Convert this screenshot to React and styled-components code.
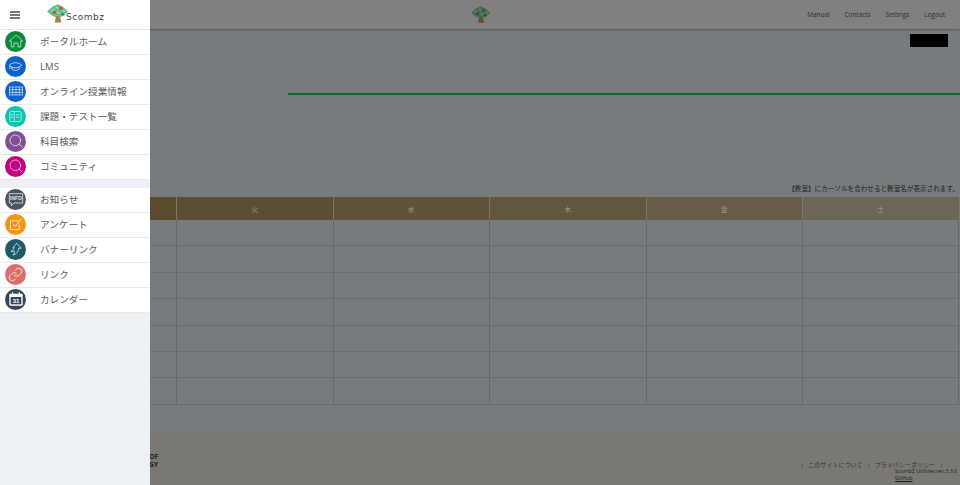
import React from 'react'
import styled, { createGlobalStyle } from 'styled-components'
import { Search, Link as LinkIcon } from 'lucide-react'

const GlobalStyle = createGlobalStyle`
    html, body {
        margin: 0;
        padding: 0;
        height: 100%;
        background-color: #777b7d;
        font-family: "Open Sans", "Noto Sans CJK JP", sans-serif;
        overflow: hidden;
    }
`

const Page = styled.div`
    width: 960px;
    height: 485px;
    display: flex;
    flex-direction: column;
    overflow: hidden;
    background-color: #777b7d;
`

const Header = styled.header`
    flex: 0 0 29px;
    position: relative;
    display: flex;
    align-items: center;
    justify-content: flex-end;
    padding-right: 15px;
    gap: 15px;
    background-color: #808080;
    box-shadow: 0 1px 2px #555;
`

const HeaderLogo = styled.div`
    position: absolute;
    left: 471px;
    top: 6px;
    display: flex;
    filter: brightness(0.6);
`

const NavLink = styled.a`
    font-size: 6.4px;
    color: #2e2e2e;
`

const Main = styled.main`
    flex: 1;
    display: flex;
    flex-direction: column;
`

const RedactRow = styled.div`
    display: flex;
    justify-content: flex-end;
    padding: 5px 12px 0 0;
    height: 64px;
    box-sizing: border-box;
`

const Redact = styled.div`
    width: 38px;
    height: 13px;
    background-color: #000;
`

const Rule = styled.div`
    display: flex;
    height: 2px;
`

const RuleSide = styled.div`
    flex: ${p => (p.$green ? 1 : '0 0 288px')};
    background-color: ${p => (p.$green ? '#0f6b26' : '#797d7f')};
`

const Notice = styled.p`
    margin: 89px 1px 0 0;
    height: 13px;
    line-height: 10px;
    text-align: right;
    font-size: 6.6px;
    color: #222;
`

const TimeTable = styled.div`
    display: grid;
    grid-template-columns: 19.5px repeat(6, 156.5px);
`

const HeadCell = styled.div`
    height: 23px;
    display: flex;
    align-items: center;
    justify-content: center;
    font-size: 7px;
    color: #9a9a94;
    background-color: ${p => p.$bg};
    border-left: 1px solid #7d7565;
    box-sizing: border-box;
`

const BodyCell = styled.div`
    height: 26.4px;
    box-sizing: border-box;
    border-left: 1px solid #67696b;
    border-bottom: 1px solid #6a6c6e;
    &:nth-child(7n) {
        border-right: 1px solid #67696b;
    }
`

const Footer = styled.footer`
    margin-top: 27px;
    flex: 1;
    position: relative;
    background-color: #7a7873;
    display: flex;
    justify-content: space-between;
    align-items: flex-start;
    padding: 21px 17px 0 0;
`

const School = styled.div`
    width: 158px;
    text-align: right;
    font-size: 6.5px;
    font-weight: 700;
    line-height: 8px;
    color: #222;
`

const FooterLinks = styled.div`
    display: flex;
    gap: 4.5px;
    margin-top: 8px;
    font-size: 6.05px;
    line-height: 9px;
    color: #333;
`

const Version = styled.div`
    position: absolute;
    left: 895px;
    top: 36px;
    white-space: nowrap;
    font-size: 5.3px;
    line-height: 7.5px;
    color: #222;
`

const GitHub = styled.a`
    display: block;
    text-decoration: underline;
`

const Sidebar = styled.aside`
    position: fixed;
    left: 0;
    top: 0;
    width: 150px;
    height: 100%;
    background-color: #edf1f5;
`

const SideTop = styled.div`
    height: 30px;
    box-sizing: border-box;
    display: flex;
    align-items: center;
    background-color: #fff;
    border-bottom: 1px solid #e6e6e6;
`

const Burger = styled.div`
    width: 10px;
    margin-left: 10px;
    height: 8px;
    box-sizing: border-box;
    border-top: 2px solid #777;
    border-bottom: 2px solid #777;
    position: relative;
    &::after {
        content: '';
        position: absolute;
        left: 0;
        right: 0;
        top: 1px;
        height: 2px;
        background-color: #777;
    }
`

const Brand = styled.div`
    margin-left: 27px;
    padding-bottom: 2px;
    display: flex;
    align-items: flex-end;
`

const BrandText = styled.span`
    font-family: "DejaVu Sans", sans-serif;
    font-size: 9px;
    letter-spacing: 0.5px;
    line-height: 12px;
    color: #444;
    margin-left: -3px;
`

const MenuGroup = styled.nav`
    margin-bottom: ${p => p.$gap || 0}px;
`

const MenuItem = styled.a`
    height: 25px;
    box-sizing: border-box;
    display: flex;
    align-items: center;
    background-color: #fff;
    border-bottom: 1px solid #e9e9e9;
    padding: 0 0 2px 5px;
    font-size: 9.65px;
    color: #5c5c5c;
`

const IconCircle = styled.span`
    flex: 0 0 21px;
    width: 21px;
    height: 21px;
    border-radius: 50%;
    background-color: ${p => p.$color};
    color: rgba(255, 255, 255, 0.85);
    display: flex;
    align-items: center;
    justify-content: center;
`

const Label = styled.span`
    margin-left: 14px;
    white-space: nowrap;
`

const Tree = ({ size = 20 }) => (
  <svg width={size} height={size * 0.85} viewBox="0 0 24 20">
    <path d="M10 12h4l1.5 8h-7z" fill="#a5824c" />
    <path d="M12 0l5 2.5 6 5.5-5 5-3.5 1-2.5-2-3 2-3.5-1.5-5.5-4.5 6-5.5z" fill="#62c088" />
    <path d="M5 8l3-3M10 3l3 2M17 7l3 1M11 9l3 1" stroke="#c9ecd5" strokeWidth="1" />
    <circle cx="8" cy="9" r="1.8" fill="#d6454a" />
    <circle cx="15" cy="4.5" r="1.8" fill="#d6454a" />
    <circle cx="17" cy="11" r="1.1" fill="#444" />
  </svg>
)

const HouseIcon = () => (
  <svg width="16" height="16" viewBox="0 0 24 24" fill="none" stroke="currentColor" strokeWidth="1.1">
    <path d="M2 12L12 3l10 9h-3v9h-4v-6H9v6H5v-9z" />
  </svg>
)

const CapIcon = () => (
  <svg width="15" height="15" viewBox="0 0 24 24" fill="none" stroke="currentColor" strokeWidth="1.3">
    <path d="M2 10c3-3 6-4 10-4s7 1 10 4c-3 3-6 4-10 4s-7-1-10-4z" />
    <path d="M6 13v3c3 3 9 3 12 0v-3" />
    <path d="M3 11v5" />
  </svg>
)

const GridIcon = () => (
  <svg width="16" height="16" viewBox="0 0 24 24" fill="none" stroke="currentColor" strokeWidth="1">
    <rect x="2" y="6" width="20" height="12" />
    <path d="M2 10h20M2 14h20M7 6v12M12 6v12M17 6v12" />
  </svg>
)

const TaskIcon = () => (
  <svg width="15" height="15" viewBox="0 0 24 24" fill="none" stroke="currentColor" strokeWidth="1.2">
    <rect x="3" y="4" width="18" height="16" rx="2" />
    <path d="M10 4v16M5 9h3M5 13h3M13 9h5M13 13h5" />
  </svg>
)

const InfoIcon = () => (
  <svg width="16" height="16" viewBox="0 0 24 24" fill="none" stroke="currentColor" strokeWidth="1.2">
    <path d="M2 4h20v14H9l-4 4v-4H2z" />
    <text x="12" y="14" fontSize="7.5" fontWeight="700" textAnchor="middle" fill="currentColor" stroke="none" fontFamily="Liberation Sans">INFO</text>
  </svg>
)

const CheckIcon = () => (
  <svg width="15" height="15" viewBox="0 0 24 24" fill="none" stroke="currentColor" strokeWidth="1.4">
    <path d="M18 12v8H4V6h12" />
    <path d="M8 11l4 4 9-12" />
  </svg>
)

const ArrowIcon = () => (
  <svg width="15" height="15" viewBox="0 0 24 24" fill="none" stroke="currentColor" strokeWidth="1.3">
    <path d="M14 2l7 8h-4c0 5-3 9-9 11 2-3 3-5 2-7l-5 2 5-7H8z" />
  </svg>
)

const CalendarIcon = () => (
  <svg width="16" height="16" viewBox="0 0 24 24">
    <rect x="2" y="4" width="20" height="18" rx="2" fill="#fff" />
    <rect x="4" y="9" width="16" height="11" fill="#33485c" />
    <rect x="6" y="2" width="2" height="4" fill="#fff" />
    <rect x="16" y="2" width="2" height="4" fill="#fff" />
    <text x="12" y="18" fontSize="9" fontWeight="700" textAnchor="middle" fill="#fff" fontFamily="Liberation Sans">31</text>
  </svg>
)

const searchIcon = <Search size={16} strokeWidth={1.2} />

const mainMenu = [
  { label: 'ポータルホーム', color: '#0b8a3c', icon: <HouseIcon /> },
  { label: 'LMS', color: '#0d62c8', icon: <CapIcon /> },
  { label: 'オンライン授業情報', color: '#0d62c8', icon: <GridIcon /> },
  { label: '課題・テスト一覧', color: '#0cc4b4', icon: <TaskIcon /> },
  { label: '科目検索', color: '#824f97', icon: searchIcon },
  { label: 'コミュニティ', color: '#c7007f', icon: searchIcon },
]

const subMenu = [
  { label: 'お知らせ', color: '#4a5561', icon: <InfoIcon /> },
  { label: 'アンケート', color: '#f39517', icon: <CheckIcon /> },
  { label: 'バナーリンク', color: '#1d5a66', icon: <ArrowIcon /> },
  { label: 'リンク', color: '#d9706d', icon: <LinkIcon size={15} strokeWidth={1.4} /> },
  { label: 'カレンダー', color: '#33485c', icon: <CalendarIcon /> },
]

const days = [
  { text: '月', bg: '#5a4b2c' },
  { text: '火', bg: '#5d4e33' },
  { text: '水', bg: '#5f5238' },
  { text: '木', bg: '#61563e' },
  { text: '金', bg: '#655d47' },
  { text: '土', bg: '#6b6656' },
]

const Menu = ({ items, gap }) => (
  <MenuGroup $gap={gap}>
    {items.map(item => (
      <MenuItem key={item.label}>
        <IconCircle $color={item.color}>{item.icon}</IconCircle>
        <Label>{item.label}</Label>
      </MenuItem>
    ))}
  </MenuGroup>
)

export default function App() {
  return (
    <Page>
      <GlobalStyle />
      <Header>
        <HeaderLogo>
          <Tree />
        </HeaderLogo>
        <NavLink>Manual</NavLink>
        <NavLink>Contacts</NavLink>
        <NavLink>Settings</NavLink>
        <NavLink>Logout</NavLink>
      </Header>
      <Main>
        <RedactRow>
          <Redact />
        </RedactRow>
        <Rule>
          <RuleSide />
          <RuleSide $green />
        </Rule>
        <Notice>【教室】にカーソルを合わせると教室名が表示されます。</Notice>
        <TimeTable>
          <HeadCell $bg="#5a4b2c" />
          {days.map(day => (
            <HeadCell key={day.text} $bg={day.bg}>{day.text}</HeadCell>
          ))}
          {Array.from({ length: 49 }).map((_, i) => (
            <BodyCell key={i} />
          ))}
        </TimeTable>
        <Footer>
          <School>
            SHIBAURA INSTITUTE OF
            <br />
            TECHNOLOGY
          </School>
          <FooterLinks>
            <span>|</span>
            <span>このサイトについて</span>
            <span>|</span>
            <span>プライバシーポリシー</span>
            <span>|</span>
          </FooterLinks>
          <Version>
            ScombZ Utilities ver.3.3.0
            <GitHub>GitHub</GitHub>
          </Version>
        </Footer>
      </Main>
      <Sidebar>
        <SideTop>
          <Burger />
          <Brand>
            <Tree size={22} />
            <BrandText>Scombz</BrandText>
          </Brand>
        </SideTop>
        <Menu items={mainMenu} gap={8} />
        <Menu items={subMenu} />
      </Sidebar>
    </Page>
  )
}
